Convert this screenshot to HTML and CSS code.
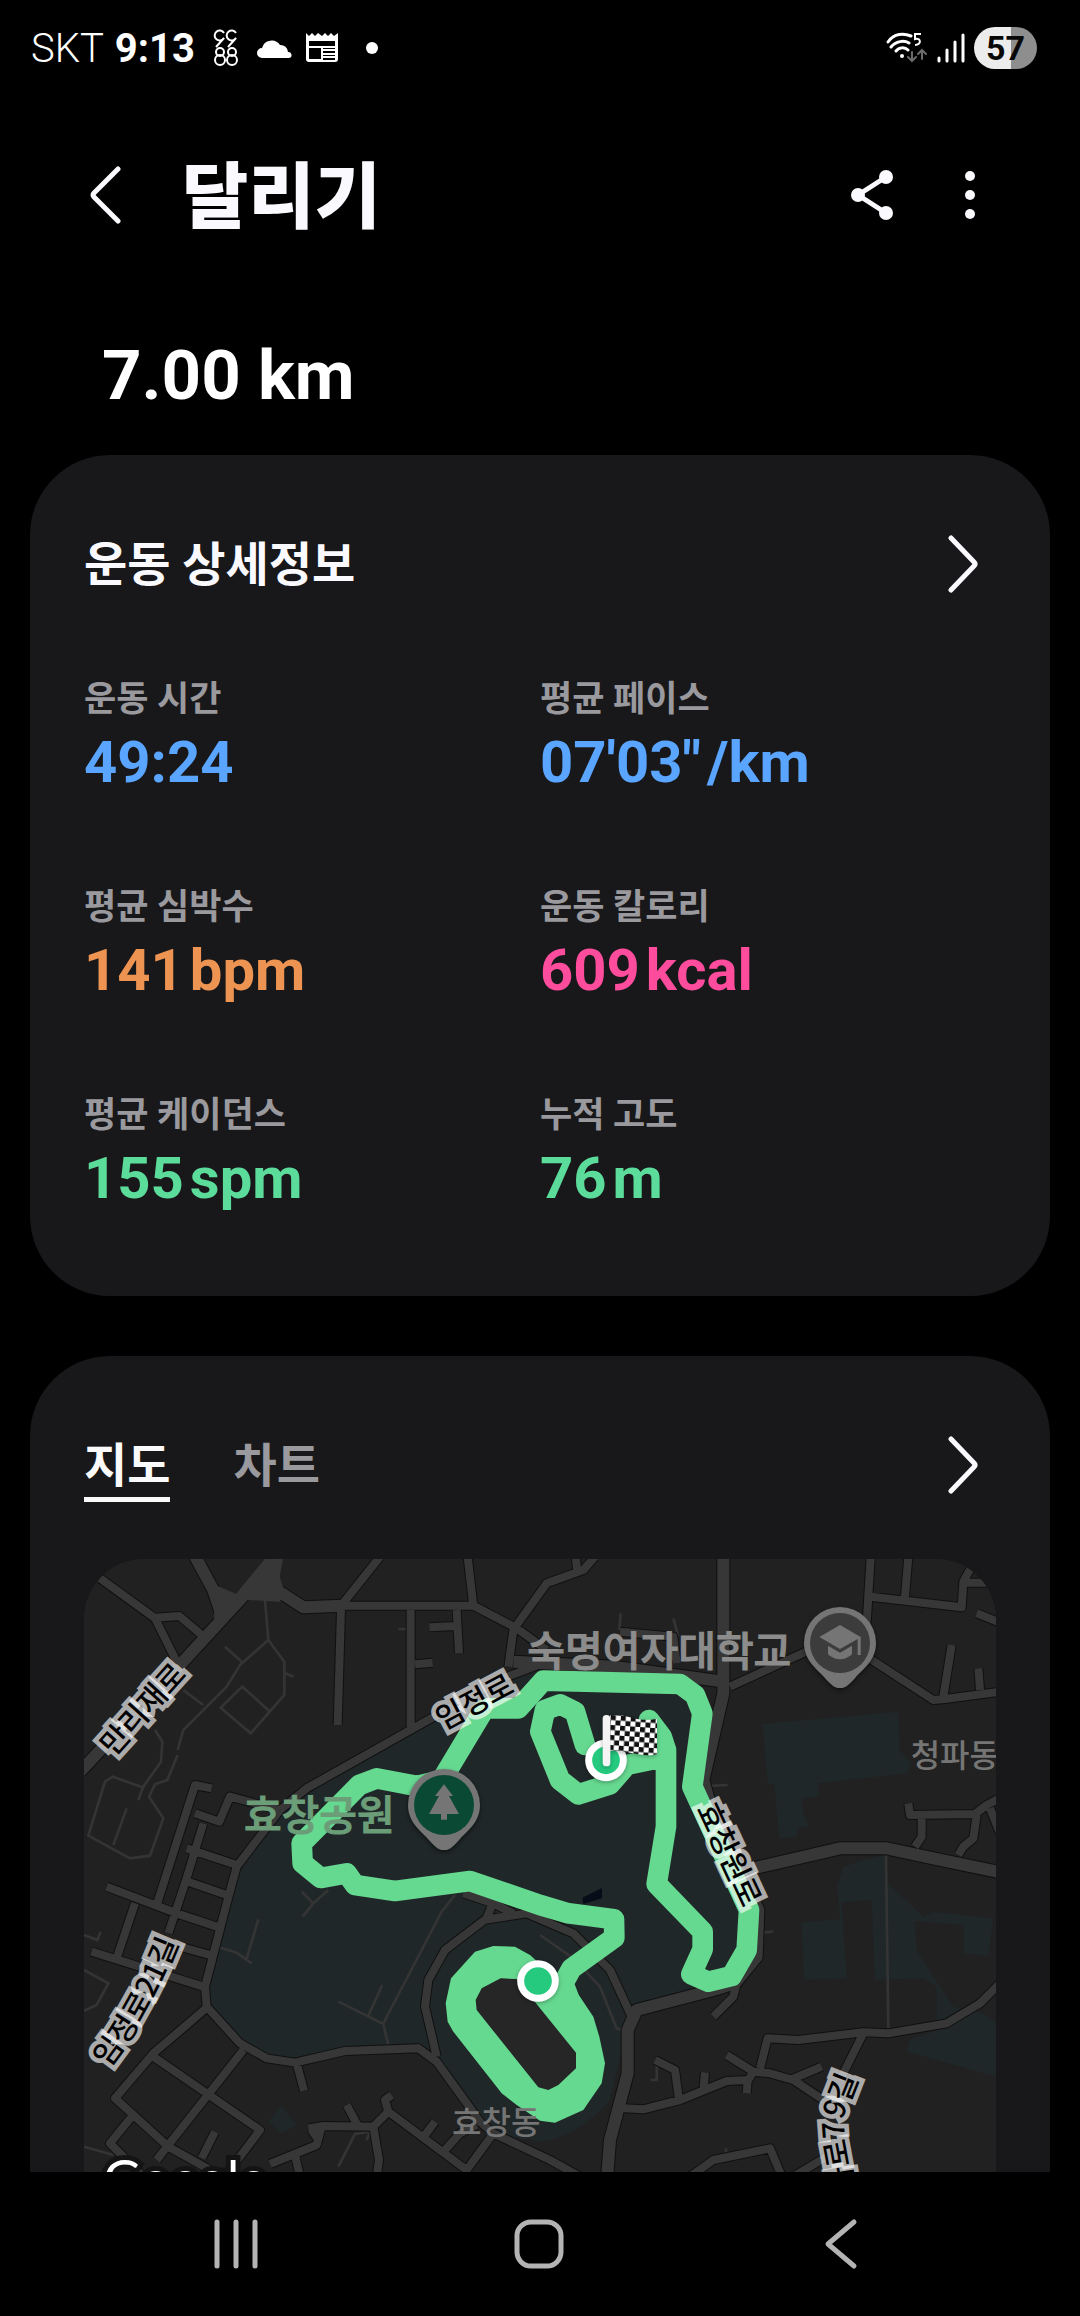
FILE: index.html
```html
<!DOCTYPE html>
<html lang="ko">
<head>
    <meta charset="UTF-8">
    <meta name="viewport" content="width=device-width, initial-scale=1.0">
    <title>달리기</title>
    <link rel="stylesheet" href="styles.css">
</head>
<body>
    <div class="status-bar">
        <div class="status-left">
            <span class="carrier">SKT</span>
            <span class="clock">9:13</span>
            <svg class="notif-9988" width="26" height="38" viewBox="0 0 26 38" fill="none" stroke="#fff" stroke-width="2">
                <path d="M11 4a5 5 0 1 0 0 5L3 18M23 4a5 5 0 1 0 0 5L15 18"/>
                <circle cx="7" cy="23" r="4"/><circle cx="7" cy="31" r="5"/>
                <circle cx="19" cy="23" r="4"/><circle cx="19" cy="31" r="5"/>
            </svg>
            <svg class="notif-cloud" width="36" height="22" viewBox="0 0 36 22" fill="#fff">
                <path d="M5 21a5 5 0 0 1 0-10A10 10 0 0 1 23 8a7.500 7.500 0 0 1 8 7 3 3 0 0 1 1 6z"/>
            </svg>
            <svg width="34" height="32" viewBox="0 0 34 32">
                <path d="M1 1l3 3 3-3 3 3 3-3 4 3 3-3 3 3 3-3 3 3 4-3v26a3 3 0 0 1-3 3H4a3 3 0 0 1-3-3z" fill="#fff"/>
                <path d="M4 9h26v5H4zM4 16h12v11H4zM18 16h12v1H18zM18 19h12v2H18zM18 23h12v1H18zM18 26h12v2H18z" fill="#000"/>
            </svg>
            <span class="notif-dot"></span>
        </div>
        <div class="status-right">
            <svg width="42" height="34" viewBox="0 0 42 34" fill="none" stroke="#fff" stroke-width="3" stroke-linecap="round">
                <path d="M2 11c6-9 16-9 23-6M5 16c5-6 13-7 18-4M10 20c3-4 9-4 12-1"/>
                <circle cx="16" cy="25" r="2" fill="#fff" stroke="none"/>
                <path d="M35 3h-6v5c6-2 7 6 0 6" stroke-width="2" stroke-linecap="butt"/>
                <path d="M26 21v9m-4-4l4 4 4-4M36 28v-9m-4 4l4-4 4 4" stroke="#6a6a6a" stroke-width="2"/>
            </svg>
            <svg width="28" height="32" viewBox="0 0 28 32" stroke="#fff" stroke-width="3" stroke-linecap="round">
                <path d="M2 26v3M10 18v11M18 10v19M26 3v26"/>
            </svg>
            <span class="battery">57</span>
        </div>
    </div>

    <header class="app-bar">
        <button class="icon-btn back-btn" aria-label="뒤로">
            <svg width="32" height="58" viewBox="0 0 32 58"><path d="M29 3L5 27q-2 2 0 4l24 24"/></svg>
        </button>
        <h1>달리기</h1>
        <button class="icon-btn share-btn" aria-label="공유">
            <svg width="44" height="52" viewBox="0 0 44 52">
                <path class="share-lines" d="M36 8L8 26l28 18"/>
                <circle cx="36" cy="8" r="7"/><circle cx="8" cy="26" r="7"/><circle cx="36" cy="44" r="7"/>
            </svg>
        </button>
        <button class="icon-btn more-btn" aria-label="더보기">
            <svg width="12" height="50" viewBox="0 0 12 50">
                <circle cx="6" cy="6" r="5"/><circle cx="6" cy="25" r="5"/><circle cx="6" cy="44" r="5"/>
            </svg>
        </button>
    </header>

    <main class="content">
        <div class="distance">7.00 km</div>

        <section class="card detail-card">
            <div class="card-head">
                <h2>운동 상세정보</h2>
                <button class="icon-btn" aria-label="운동 상세정보 보기">
                    <svg width="32" height="60" viewBox="0 0 32 60"><path d="M4 4l23 24q2 2 0 4L4 56"/></svg>
                </button>
            </div>
            <dl class="stats">
                <div class="stat blue"><dt>운동 시간</dt><dd>49:24</dd></div>
                <div class="stat blue"><dt>평균 페이스</dt><dd>07'03"<span class="unit">/km</span></dd></div>
                <div class="stat orange"><dt>평균 심박수</dt><dd>141<span class="unit">bpm</span></dd></div>
                <div class="stat pink"><dt>운동 칼로리</dt><dd>609<span class="unit">kcal</span></dd></div>
                <div class="stat green"><dt>평균 케이던스</dt><dd>155<span class="unit">spm</span></dd></div>
                <div class="stat green"><dt>누적 고도</dt><dd>76<span class="unit">m</span></dd></div>
            </dl>
        </section>

        <section class="card map-card">
            <div class="card-head">
                <div class="tabs" role="tablist">
                    <button class="tab active" role="tab" aria-selected="true">지도</button>
                    <button class="tab" role="tab" aria-selected="false">차트</button>
                </div>
                <button class="icon-btn" aria-label="지도 보기">
                    <svg width="32" height="60" viewBox="0 0 32 60"><path d="M4 4l23 24q2 2 0 4L4 56"/></svg>
                </button>
            </div>

            <svg class="map" viewBox="12 27 2736 2100" preserveAspectRatio="xMidYMin slice">
                <defs>
                    <path id="roads-wide" d="M0 665L300 345L580 40M1930 0V430L1870 690L1900 800L2035 1080L2030 1220L1965 1300L1900 1320L1670 1380L1643 1440V1570L1590 1770L1580 1900M1300 335L1600 350L1930 395M2020 955L2280 895H2420L2560 925L2760 967M335 0L400 120L430 210M590 120L670 172L790 167"/>
                    <path id="roads" d="M60 85L225 205L290 335M225 203L298 198L365 255M780 167H1180L1310 235L1400 300M785 165L900 20M783 180L773 525M992 180V535M1005 343L1058 338M1130 180L1137 310M1048 232L1125 228M1180 168L1163 20M1310 225L1400 100L1510 60L1545 20M1487 20L1492 65M1300 240L1285 350
                        M1400 335L1270 385L1000 535L680 715L600 780L470 950L440 1060L375 1310L380 1370L480 1480L560 1525L645 1538L795 1503L1015 1495L1070 1535L1200 1715L1240 1750L1410 1830L1500 1880
                        M600 780L450 740L418 815L345 790M395 715L345 705L230 1065M370 820L315 1000L265 1150M320 895L470 945M325 995L440 1035M80 1010L290 1090L410 1130M165 1060L110 1225M35 1205L370 1310M300 1190L390 1215
                        M378 1375L220 1510L105 1645L265 1790L390 1860M155 1700L90 1780L200 1890M220 1520L540 1740L450 1860M490 1500L265 1785L230 1830M405 1745L365 1825M650 1540L672 1622
                        M1240 1055L1220 1105L1095 1200L1045 1290L1035 1370L1070 1520M1210 1110L1340 1090L1480 1150L1590 1260L1655 1400M1150 1030L1240 1060L1300 1090
                        M1620 245L1780 260L1790 340M1950 410L2200 295M2360 320L2560 450L2595 447L2760 425M2360 220L2372 20M2372 140L2645 172L2650 95L2675 50M2650 98H2760M2475 140L2485 20M2690 190L2760 218M2590 440L2615 285M2700 420L2695 355
                        M2485 760L2490 795L2685 792L2720 765L2760 745M2525 800V860L2505 890M2690 795L2680 865L2650 890L2635 915M2730 775L2760 850
                        M1900 1400L1960 1340L1970 1300M2040 1555L2063 1465L2155 1470L2350 1447L2425 1450L2600 1420L2700 1360L2760 1300M1940 1515L2020 1565L2070 1570L2140 1590L2230 1650M2130 1590L2225 1550M2350 1450L2280 1590M1630 1675L1690 1678L1800 1650L1940 1593L2005 1590L2020 1565M2003 1590L2000 1630M1725 1530L1785 1560L1797 1650M1875 1567L1870 1625M1830 1880L1900 1830L2070 1795L2110 1890M2140 1880L2240 1820
                        M685 1735L730 1728L880 1730L925 1685L915 1650L935 1635M925 1685L1160 1860L1240 1750M880 1730L897 1830L890 1880M800 1665L835 1730M725 1730L710 1785L570 1842M695 1740L715 1770M645 1815L660 1880M1035 1755L1065 1715M1095 1800L1140 1750L1190 1725M1160 1850V1890"/>
                    <path id="curve-imjeong" d="M85 1556Q210 1400 303 1160"/>
                    <path id="curve-cheongpa" d="M2345 2060L2314 1860Q2286 1740 2294 1690L2335 1586"/>
                    <pattern id="checker" width="30" height="30" patternUnits="userSpaceOnUse" patternTransform="translate(1593 495) rotate(4)">
                        <rect width="30" height="30" fill="#fff"/>
                        <path d="M0 0h15v15H0zM15 15h15v15H15z" fill="#111"/>
                    </pattern>
                </defs>

                <rect class="land" width="2760" height="2140"/>

                <!-- parks and school grounds -->
                <path class="park" d="M1400 335L1270 385L1000 535L680 715L600 780L470 950L440 1060L375 1310L380 1370L480 1480L560 1525L645 1538L795 1503L1015 1495L1070 1535L1200 1715L1290 1760L1390 1775Q1500 1755 1590 1650L1640 1440L1670 1380L1965 1300L2030 1220L2035 1080L1880 760L1870 690L1900 500L1840 390Z"/>
                <path class="park" d="M2047 522L2455 485L2458 600L2495 640L2480 670L2215 700V740L2165 745L2170 790L2187 830L2155 832L2150 860L2098 865L2083 705L2063 700Z"/>
                <path class="park" d="M2290 950L2350 930L2418 915L2425 1000L2530 1100L2560 1085L2740 1105L2725 1218L2650 1210V1125L2505 1113L2510 1200L2560 1280L2620 1370L2710 1390L2760 1430V1583L2480 1505L2490 1470L2570 1440V1310L2530 1285L2385 1290L2375 1050L2285 1057L2300 1285L2172 1290L2165 1117L2280 1108L2272 1010Z"/>
                <path class="park" d="M565 1715L605 1668L650 1725L605 1750Z"/>
                <path class="pond" d="M1507 1043L1566 1014V1045L1510 1062Z"/>

                <path class="alleys" d="M555 150L565 270L480 345L440 410L310 540L293 600M435 290L485 335M565 270L613 335V435L512 550L422 473L487 410L570 485M613 368L640 380M310 420L370 465M293 615L262 690L225 703L207 740L250 805L210 917L150 925L25 857L75 695L98 680L187 712M225 540L247 575L243 635L190 710L175 750M140 775L100 885M955 237H980
                    M412 1190L470 1208L515 1240M500 1225L535 1108M665 1025L700 1060L745 1020M668 1100L700 1060M775 1355L910 1422L925 1485M865 1397L907 1305M910 1420L1085 1085L1125 1035M12 1260L85 1300L50 1365L12 1382M12 1155L52 1170L62 1145M12 1790L100 1815M775 1850L825 1752L870 1745L860 1770
                    M2418 915L2425 1440M1380 1155L1480 1225L1560 1310L1610 1435L1640 1445M2050 1147L2080 1145M1622 190L1618 240M1780 205L1795 260M1880 708L1943 705M1730 1530V1590H1712M1938 1795V1815"/>

                <use class="casing-wide" href="#roads-wide"/>
                <use class="casing" href="#roads"/>
                <use class="fill-wide" href="#roads-wide"/>
                <use class="fill" href="#roads"/>
                <path class="junction" d="M560 20L468 131L405 105L402 205L440 215L502 150L600 155L612 120L599 80L610 20Z"/>

                <!-- running route -->
                <path class="track" d="M1187 1350L1205 1315L1262 1285L1310 1287L1380 1375L1488 1508V1555L1435 1605L1405 1620L1375 1612L1190 1380Z"/>
                <path class="route-fill" d="M1097 1360L1113 1285L1185 1205L1240 1188L1305 1190L1350 1215L1400 1260L1490 1325L1540 1400L1558 1460L1575 1540L1565 1600L1510 1680L1425 1718L1380 1712L1310 1665L1265 1630L1120 1445L1103 1415ZM1187 1350L1190 1380L1375 1612L1405 1620L1435 1605L1488 1555V1508L1380 1375L1310 1287L1262 1285L1205 1315Z"/>
                <path class="route" d="M1515 585L1485 485L1440 463L1395 480L1381 545L1440 690L1495 733L1590 703L1640 645L1758 620M1707 510L1745 560L1758 600V830L1730 1002L1868 1145V1198L1834 1273L1885 1295L1955 1278L2000 1200L2007 1080L1837 710L1867 490L1845 435L1800 402L1390 392L1315 475H1225L1210 482L1085 690L1010 708L890 685L838 705L665 880L668 940L722 984L800 970L825 1005L945 1023L1170 993L1380 1065L1465 1090L1602 1108L1603 1163L1475 1255L1450 1300L1465 1340"/>

                <text class="area-label" x="2492" y="652">청파동</text>
                <text class="area-label" x="1116" y="1751">효창동</text>
                <text class="poi-label" x="1738" y="348" text-anchor="middle">숙명여자대학교</text>
                <text class="poi-label park-label" x="718" y="839" text-anchor="middle">효창공원</text>

                <text class="road-label" text-anchor="middle" transform="translate(212 499) rotate(-48)">만리재로</text>
                <text class="road-label" text-anchor="middle" transform="translate(1199 484) rotate(-28)">임정로</text>
                <text class="road-label" text-anchor="middle" transform="translate(1919 926) rotate(65)">효창원로</text>
                <text class="road-label"><textPath href="#curve-imjeong">임정로21길</textPath></text>
                <text class="road-label" text-anchor="end"><textPath href="#curve-cheongpa" startOffset="100%">청파로79길</textPath></text>

                <!-- park pin -->
                <g class="pin" transform="translate(1092 765)">
                    <path d="M-108 0a108 108 0 1 1 216 0c0 50-35 75-62 104-24 26-30 31-46 31s-22-5-46-31c-27-29-62-54-62-104z"/>
                    <circle r="90" fill="#0a4a34"/>
                    <path d="M0-62L27-27H15L45 27H9V44H-9V27H-45L-15-27H-27Z"/>
                </g>
                <!-- university pin -->
                <g class="pin" transform="translate(2280 279)">
                    <path d="M-108 0a108 108 0 1 1 216 0c0 50-35 75-62 104-24 26-30 31-46 31s-22-5-46-31c-27-29-62-54-62-104z"/>
                    <circle r="90" fill="#3c3c3c"/>
                    <path d="M0-54L62-18V36H53V-12L0 18L-62-18ZM-36 8L0 29L36 8V34Q20 49 0 49T-36 34Z"/>
                </g>

                <!-- start and finish markers -->
                <g class="marker">
                    <circle cx="1374" cy="1293" r="52"/>
                    <circle cx="1578" cy="631" r="52"/>
                </g>
                <g class="flag">
                    <path d="M1591 496C1640 488 1670 520 1731 506V612C1690 626 1640 598 1591 603Z" fill="url(#checker)"/>
                    <rect x="1568" y="495" width="23" height="154" rx="11" fill="#f4f4f4"/>
                </g>

                <text class="map-logo" x="70" y="1944">Google</text>
            </svg>
        </section>
    </main>

    <nav class="nav-bar">
        <button class="icon-btn" aria-label="최근 앱">
            <svg width="50" height="52" viewBox="0 0 50 52"><path d="M6 4v44M25 4v44M44 4v44"/></svg>
        </button>
        <button class="icon-btn" aria-label="홈">
            <svg width="52" height="52" viewBox="0 0 52 52"><rect x="4" y="4" width="44" height="44" rx="14"/></svg>
        </button>
        <button class="icon-btn" aria-label="뒤로">
            <svg width="50" height="52" viewBox="0 0 50 52"><path d="M38 4L12 26l26 22"/></svg>
        </button>
    </nav>
</body>
</html>
```

FILE: styles.css
```css
* {
    box-sizing: border-box;
}
body {
    margin: 0;
    height: 100vh;
    display: flex;
    flex-direction: column;
    overflow: hidden;
    background-color: #000;
    color: #fafafe;
    font-family: Roboto, "Noto Sans CJK KR", sans-serif;
}
h1, h2, dl, dd {
    margin: 0;
}
button {
    padding: 0;
    border: 0;
    background: none;
    color: inherit;
    font: inherit;
}
svg {
    display: block;
}

/* status bar */
.status-bar {
    display: flex;
    flex-shrink: 0;
    justify-content: space-between;
    align-items: center;
    height: 96px;
    padding: 0 43px 0 31px;
    color: #fff;
}
.status-left,
.status-right {
    display: flex;
    align-items: center;
}
.status-right {
    gap: 9px;
}
.carrier {
    font-size: 40px;
    font-weight: 300;
    margin-right: 11px;
}
.clock {
    font-size: 40px;
    font-weight: 700;
    margin-right: 18px;
}
.notif-9988 {
    margin-right: 18px;
}
.notif-cloud {
    margin-right: 12px;
}
.notif-dot {
    width: 12px;
    height: 12px;
    margin-left: 27px;
    border-radius: 50%;
    background-color: #fff;
}
.battery {
    width: 63px;
    height: 42px;
    border-radius: 21px;
    background: linear-gradient(to right, #ececec 58%, #8e8e8e 58%);
    color: #080808;
    font-size: 34px;
    font-weight: 700;
    line-height: 43px;
    text-align: center;
}

/* app bar */
.app-bar {
    display: flex;
    flex-shrink: 0;
    align-items: center;
    height: 198px;
    padding: 0 104px 0 89px;
}
.app-bar h1 {
    flex: 1;
    margin-left: 61px;
    padding-top: 6px;
    font-size: 72px;
    line-height: 96px;
    font-weight: 900;
}
.icon-btn svg {
    fill: none;
    stroke: #fafafe;
    stroke-width: 5px;
    stroke-linecap: round;
    stroke-linejoin: round;
}
.share-btn circle,
.more-btn circle {
    fill: #fafafe;
    stroke: none;
}
.more-btn {
    margin-left: 70px;
}

/* content */
.content {
    flex: 1;
    min-height: 0;
    overflow: hidden;
    padding: 0 30px;
}
.distance {
    padding: 36px 72px 33px;
    color: #fff;
    font-size: 69px;
    font-weight: 700;
    line-height: 92px;
}
.card {
    padding: 72px 54px 84px;
    border-radius: 80px;
    background-color: #18181a;
}
.map-card {
    margin-top: 60px;
}
.card-head {
    display: flex;
    justify-content: space-between;
    align-items: center;
    height: 74px;
    padding-right: 17px;
}
.card-head h2 {
    padding-top: 2px;
    font-size: 47px;
    line-height: 74px;
    font-weight: 700;
}
.stats {
    display: grid;
    grid-template-columns: 1fr 1fr;
    row-gap: 84px;
    margin-top: 73px;
}
.stat dt {
    color: #99999e;
    font-size: 35px;
    font-weight: 700;
    line-height: 52px;
}
.stat dd {
    font-size: 58px;
    font-weight: 700;
    line-height: 72px;
}
.detail-card {
    padding-bottom: 82px;
}
.unit {
    margin-left: 6px;
}
.blue { color: #5aa5ff; }
.orange { color: #ee9452; }
.pink { color: #ff4c9c; }
.green { color: #5cdc9a; }

.tabs {
    display: flex;
    gap: 63px;
}
.tab {
    height: 74px;
    padding-top: 6px;
    border-bottom: 5px solid transparent;
    color: #99999e;
    font-size: 47px;
    font-weight: 700;
    line-height: 63px;
}
.tab.active {
    border-bottom-color: #fafafa;
    color: #fafafa;
}

/* map */
.map {
    width: 100%;
    height: 700px;
    margin-top: 57px;
    border-radius: 60px;
    background-color: #212121;
    font-family: "Noto Sans CJK KR", sans-serif;
}
.land { fill: #212121; }
.park { fill: #1f2728; }
.pond { fill: #070d18; }
.track { fill: #262626; }
.alleys {
    fill: none;
    stroke: #343434;
    stroke-width: 8px;
}
.casing, .casing-wide, .fill, .fill-wide {
    fill: none;
    stroke-linejoin: round;
}
.casing {
    stroke: #101010;
    stroke-width: 30px;
}
.casing-wide {
    stroke: #101010;
    stroke-width: 42px;
}
.fill {
    stroke: #373737;
    stroke-width: 24px;
}
.fill-wide {
    stroke: #373737;
    stroke-width: 36px;
}
.junction { fill: #373737; }
.route {
    fill: none;
    stroke: #66d991;
    stroke-width: 62px;
    stroke-linecap: round;
    stroke-linejoin: round;
}
.route-fill { fill: #66d991; }
.poi-label {
    fill: #8c8c8c;
    stroke: #8c8c8c;
    stroke-width: 3px;
    font-size: 123px;
    font-weight: 500;
}
.park-label {
    fill: #6b9e78;
    stroke: #6b9e78;
}
.area-label {
    fill: #757575;
    font-size: 96px;
    font-weight: 500;
}
.road-label {
    fill: #000;
    stroke: rgba(255, 255, 255, 0.64);
    stroke-width: 28px;
    paint-order: stroke;
    font-size: 90px;
    font-weight: 500;
}
.pin {
    fill: #757575;
    filter: drop-shadow(0 6px 6px rgba(0, 0, 0, 0.5));
}
.marker {
    fill: #25ca7f;
    stroke: #fff;
    stroke-width: 21px;
    filter: drop-shadow(0 4px 6px rgba(0, 0, 0, 0.3));
}
.flag {
    filter: drop-shadow(0 4px 6px rgba(0, 0, 0, 0.3));
}
.map-logo {
    fill: #fff;
    stroke: #141414;
    stroke-width: 30px;
    paint-order: stroke;
    font-family: Lato, sans-serif;
    font-size: 156px;
}

/* navigation bar */
.nav-bar {
    display: flex;
    flex-shrink: 0;
    justify-content: space-between;
    align-items: center;
    height: 144px;
    padding: 0 214px 0 211px;
    background-color: #000;
}
.nav-bar svg {
    stroke: #b4b4b4;
}
```
